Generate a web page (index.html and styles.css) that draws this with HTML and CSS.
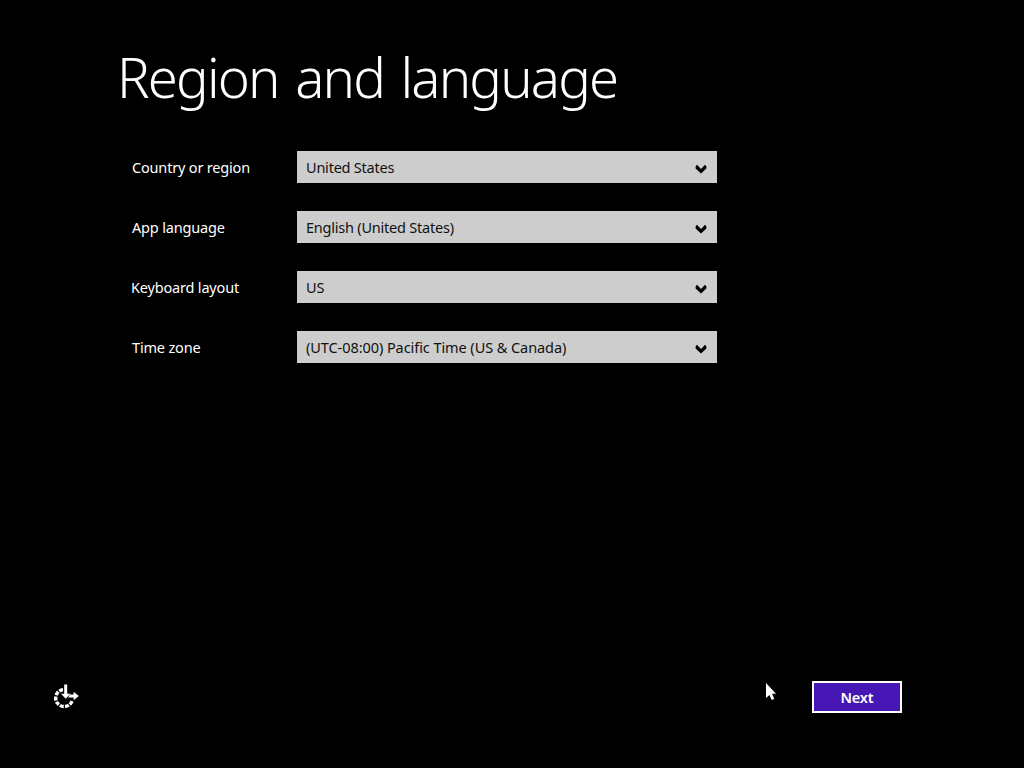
FILE: index.html
```html
<!DOCTYPE html>
<html lang="en">
<head>
<meta charset="utf-8">
<title>Region and language</title>
<link rel="stylesheet" href="styles.css">
</head>
<body>
<svg class="defs" width="0" height="0" aria-hidden="true"><symbol id="chevron" viewBox="0 0 12 10"><path d="M.6 2.6 2 .8l4 4.3L10 .8l1.4 1.8v1.8L6 9.6.6 4.4z"/></symbol></svg>
<main class="screen">
  <h1 class="title">Region and language</h1>
  <form class="settings">
    <div class="row"><span class="label">Country or region</span><div class="select"><span class="value">United States</span><svg class="chevron"><use href="#chevron"/></svg></div></div>
    <div class="row"><span class="label">App language</span><div class="select"><span class="value">English (United States)</span><svg class="chevron"><use href="#chevron"/></svg></div></div>
    <div class="row"><span class="label keyboard">Keyboard layout</span><div class="select"><span class="value">US</span><svg class="chevron"><use href="#chevron"/></svg></div></div>
    <div class="row"><span class="label">Time zone</span><div class="select"><span class="value zone">(UTC-08:00) Pacific Time (US &amp; Canada)</span><svg class="chevron"><use href="#chevron"/></svg></div></div>
  </form>
  <footer class="footer">
    <svg class="access" viewBox="0 0 26 26" aria-label="Ease of access">
      <path d="M19.1 17.2A8.5 8.5 0 1 1 10 5.6" fill="none" stroke="#fff" stroke-width="3.4" stroke-dasharray="27 8.5" pathLength="240"/>
      <path d="M11.2.4h3v9.4h3.2l-4.7 5-4.7-5h3.2z" fill="#fff"/>
      <path d="M17 10.6h3.6V7.8l5.2 4.2-5.2 4.2v-2.8H15z" fill="#fff"/>
    </svg>
    <button class="next" type="button">Next</button>
  </footer>
  <svg class="cursor" viewBox="0 0 12 19"><path d="M1 1v15l3.4-3.1 2.4 5 2.5-1.1-2.3-5H11z" fill="#fff"/></svg>
</main>
</body>
</html>
```

FILE: styles.css
```css
* { box-sizing: border-box; }
body { margin: 0; background: #000; color: #fff; font: 15px/20px "Noto Sans", sans-serif; }
.defs { position: absolute; }
.screen { width: 1024px; height: 768px; display: flex; flex-direction: column; padding: 39px 122px 55px 53px; overflow: hidden; }
.title { margin: 0 0 0 64px; height: 112px; font-size: 54.5px; line-height: 76px; font-weight: 280; letter-spacing: -1.85px; word-spacing: 4.2px; white-space: nowrap; }
.settings { display: flex; flex-direction: column; gap: 28px; margin-left: 79px; }
.row { display: flex; align-items: center; height: 32px; }
.label { width: 165px; white-space: nowrap; font-size: 14.5px; letter-spacing: -0.18px; }
.keyboard { text-indent: -1px; }
.select { display: flex; align-items: center; justify-content: space-between; width: 420px; height: 32px; padding: 0 10px 0 9px; background: #cdcdcd; color: #111; }
.value { white-space: nowrap; font-size: 14.5px; letter-spacing: -0.22px; }
.zone { letter-spacing: -0.07px; }
.chevron { width: 12px; height: 10px; margin-top: 3px; }
.footer { display: flex; justify-content: space-between; align-items: center; margin-top: auto; height: 32px; }
.access { width: 26px; height: 26px; }
.next { width: 90px; height: 32px; padding: 0; border: 2px solid #fff; background: #4617b4; color: #fff; font: 600 14.5px/20px "Noto Sans", sans-serif; letter-spacing: -0.2px; }
.cursor { position: absolute; left: 765px; top: 682px; width: 12px; height: 19px; }
```
